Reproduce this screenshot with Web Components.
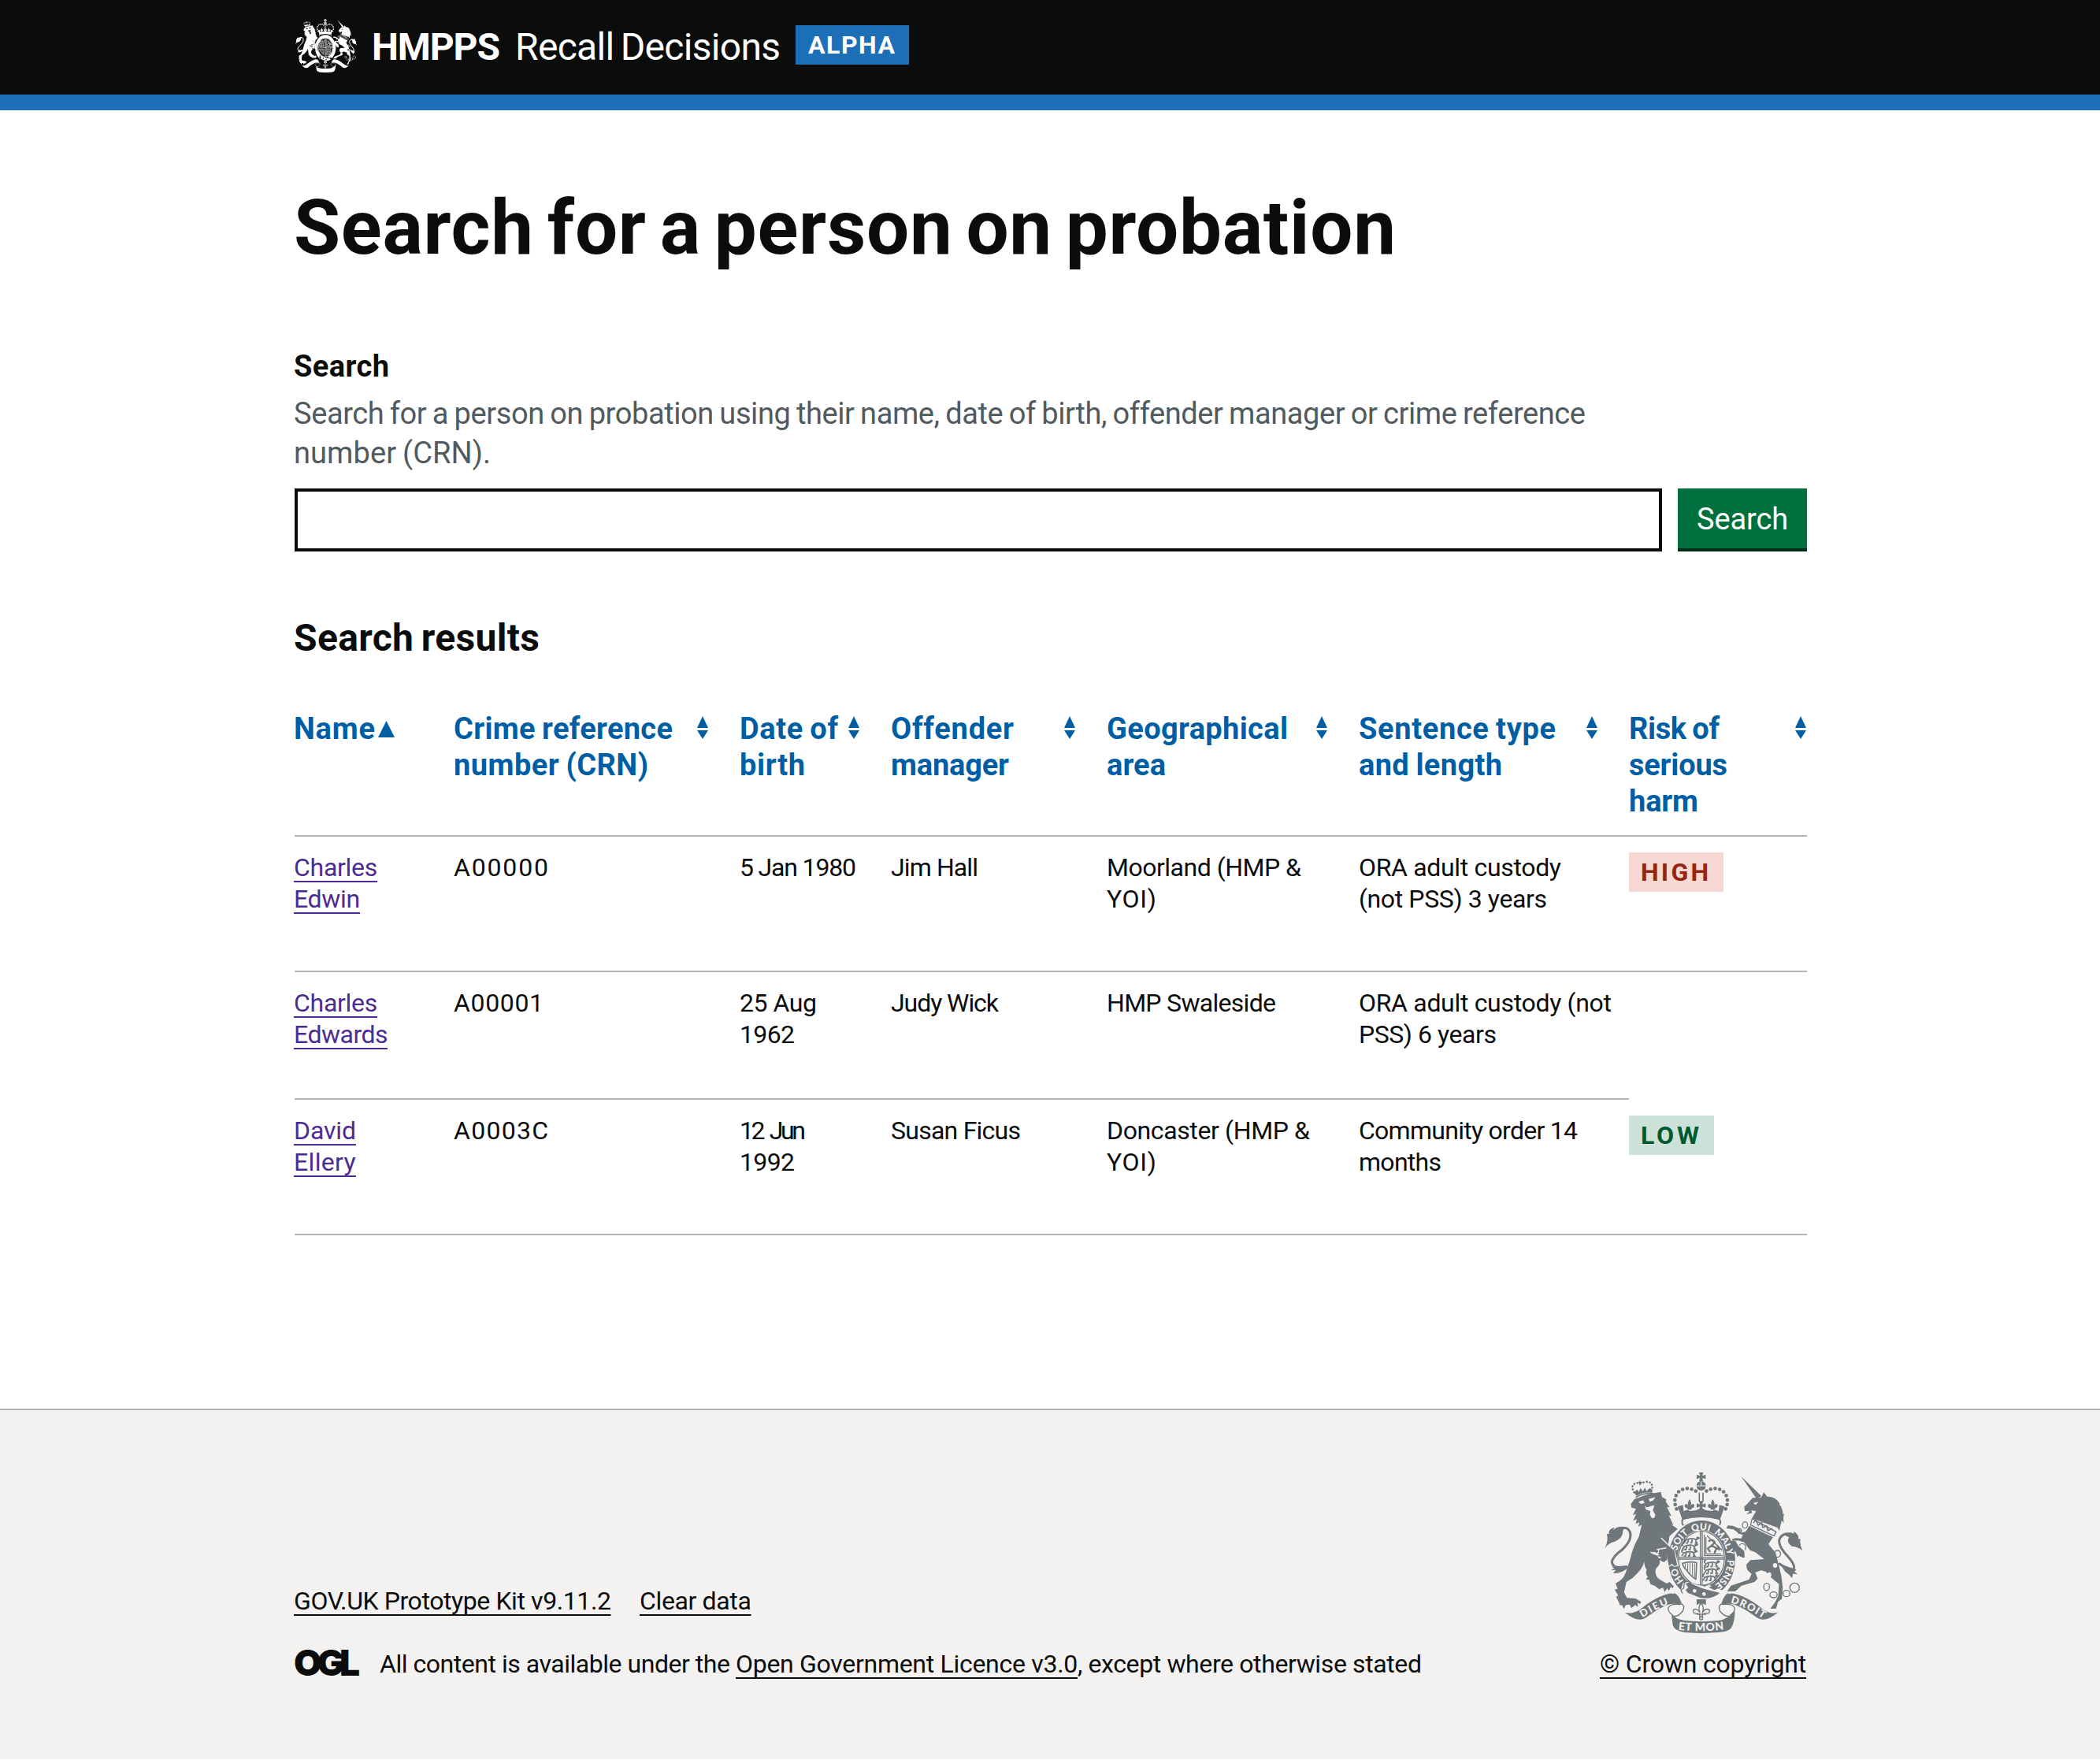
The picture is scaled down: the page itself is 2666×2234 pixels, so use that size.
<!DOCTYPE html>
<html lang="en">
<head>
<meta charset="utf-8">
<title>Search for a person on probation</title>
<style>
  html, body { margin: 0; background: #fff; }
  body { font-family: Roboto, "Liberation Sans", sans-serif; color: #0b0c0c; font-size: 32px; line-height: 40px; }
</style>
</head>
<body>
<recall-page></recall-page>

<template id="t-page">
  <style>
    :host { display: block; height: 2233px; overflow: hidden; }
    .page { display: flex; flex-direction: column; height: 100%; }
    main { flex: 1; width: 1920px; margin: 0 auto 0 374px; padding-top: 99px; box-sizing: border-box; }
    h1 { margin: 0 0 0 -1px; font: bold 96px/100px Roboto, sans-serif; word-spacing: -.08em; }
    h2 { margin: 80px 0 62px -1px; font: bold 48px/60px Roboto, sans-serif; word-spacing: -.06em; }
  </style>
  <div class="page">
    <site-header></site-header>
    <main>
      <h1><fit-line w="1399">Search for a person on probation</fit-line></h1>
      <search-form></search-form>
      <h2><fit-line w="312">Search results</fit-line></h2>
      <results-table></results-table>
    </main>
    <site-footer></site-footer>
  </div>
</template>

<template id="t-header">
  <style>
    :host { display: block; background: #0b0c0c; color: #fff; border-bottom: 20px solid #1d70b8; height: 120px; flex: none; }
    .bar { display: flex; align-items: flex-start; padding-left: 375px; font-size: 48px; line-height: 60px; }
    royal-crest { width: 78px; height: 68px; margin-top: 24px; --crest-bg: #0b0c0c; }
    .org { margin: 30px 0 0 19px; font-weight: bold; }
    .name { margin: 30px 0 0 19px; word-spacing: -.06em; }
    status-tag { margin: 32px 0 0 19px; }
  </style>
  <div class="bar">
    <royal-crest compact></royal-crest>
    <fit-line class="org" w="163">HMPPS</fit-line>
    <fit-line class="name" w="337">Recall Decisions</fit-line>
    <status-tag tone="blue" style="width:144px"><fit-line w="110">ALPHA</fit-line></status-tag>
  </div>
</template>

<template id="t-form">
  <style>
    :host { display: block; margin-top: 101px; font-size: 38px; line-height: 50px; word-spacing: -.04em; }
    label { display: block; font-weight: bold; margin-left: -1px; }
    .hint { color: #505a5f; margin: 10px 0 0 -1px; }
    .row { display: flex; gap: 20px; margin-top: 20px; height: 80px; }
    input { flex: 1; box-sizing: border-box; height: 80px; border: 4px solid #0b0c0c; border-radius: 0; background: #fff; padding: 0 8px; font: inherit; }
    button { width: 164px; height: 76px; border: 0; border-radius: 0; background: #00703c; box-shadow: 0 4px 0 #002d18; color: #fff; font: inherit; padding: 1px 0 0; display: flex; align-items: center; justify-content: center; }
  </style>
  <label for="q"><fit-line w="121">Search</fit-line></label>
  <div class="hint">
    <fit-line w="1640">Search for a person on probation using their name, date of birth, offender manager or crime reference</fit-line>
    <fit-line w="250">number (CRN).</fit-line>
  </div>
  <div class="row"><input id="q" type="text"><button type="button"><fit-line w="116">Search</fit-line></button></div>
</template>

<template id="t-table">
  <style>
    :host { display: block; }
    a { color: #4c2c92; text-decoration: none; display: block; margin-left: -1px; }
  </style>
  <table-row heading style="height:160px">
    <sort-head state="ascending"><fit-line w="103" style="margin-left:-1px">Name</fit-line></sort-head>
    <sort-head><fit-line w="278">Crime reference</fit-line><fit-line w="247">number (CRN)</fit-line></sort-head>
    <sort-head><fit-line w="125">Date of</fit-line><fit-line w="83">birth</fit-line></sort-head>
    <sort-head><fit-line w="156">Offender</fit-line><fit-line w="150">manager</fit-line></sort-head>
    <sort-head><fit-line w="230">Geographical</fit-line><fit-line w="75">area</fit-line></sort-head>
    <sort-head><fit-line w="250">Sentence type</fit-line><fit-line w="182">and length</fit-line></sort-head>
    <sort-head last><fit-line w="115">Risk of</fit-line><fit-line w="125">serious</fit-line><fit-line w="88">harm</fit-line></sort-head>
  </table-row>
  <table-row style="height:172px">
    <table-cell><a><fit-line u w="106">Charles</fit-line><fit-line u w="84">Edwin</fit-line></a></table-cell>
    <table-cell><fit-line w="120">A00000</fit-line></table-cell>
    <table-cell><fit-line w="148">5 Jan 1980</fit-line></table-cell>
    <table-cell><fit-line w="111">Jim Hall</fit-line></table-cell>
    <table-cell><fit-line w="247">Moorland (HMP &amp;</fit-line><fit-line w="63">YOI)</fit-line></table-cell>
    <table-cell><fit-line w="257">ORA adult custody</fit-line><fit-line w="239">(not PSS) 3 years</fit-line></table-cell>
    <table-cell><status-tag tone="red" style="width:120px"><fit-line w="86">HIGH</fit-line></status-tag></table-cell>
  </table-row>
  <table-row style="height:162px">
    <table-cell><a><fit-line u w="106">Charles</fit-line><fit-line u w="119">Edwards</fit-line></a></table-cell>
    <table-cell><fit-line w="114">A00001</fit-line></table-cell>
    <table-cell><fit-line w="98">25 Aug</fit-line><fit-line w="70">1962</fit-line></table-cell>
    <table-cell><fit-line w="137">Judy Wick</fit-line></table-cell>
    <table-cell><fit-line w="215">HMP Swaleside</fit-line></table-cell>
    <table-cell><fit-line w="321">ORA adult custody (not</fit-line><fit-line w="175">PSS) 6 years</fit-line></table-cell>
  </table-row>
  <table-row style="height:172px">
    <table-cell><a><fit-line u w="79">David</fit-line><fit-line u w="79">Ellery</fit-line></a></table-cell>
    <table-cell><fit-line w="120">A0003C</fit-line></table-cell>
    <table-cell><fit-line w="84" style="word-spacing:4px">12 Jun</fit-line><fit-line w="70">1992</fit-line></table-cell>
    <table-cell><fit-line w="165">Susan Ficus</fit-line></table-cell>
    <table-cell><fit-line w="258">Doncaster (HMP &amp;</fit-line><fit-line w="63">YOI)</fit-line></table-cell>
    <table-cell><fit-line w="278">Community order 14</fit-line><fit-line w="105">months</fit-line></table-cell>
    <table-cell><status-tag tone="green" style="width:108px"><fit-line w="74">LOW</fit-line></status-tag></table-cell>
  </table-row>
</template>

<template id="t-row">
  <style>
    :host { display: grid; grid-template-columns: 202px 363px 192px 274px 320px 343px 226px; }
  </style>
  <slot></slot>
</template>

<template id="t-cell">
  <style>
    :host { display: block; box-sizing: border-box; border-bottom: 2px solid #b1b4b6; padding-top: 19px; }
    ::slotted(status-tag) { margin-top: 1px; }
  </style>
  <slot></slot>
</template>

<template id="t-sort">
  <style>
    :host { display: flex; justify-content: space-between; box-sizing: border-box; border-bottom: 2px solid #b1b4b6; padding-right: 40px; color: #005ea5; font-size: 38px; font-weight: bold; line-height: 46px; word-spacing: -.04em; }
    :host([last]) { padding-right: 1px; }
    :host([state="ascending"]) { justify-content: flex-start; }
    svg { display: block; flex: none; fill: currentColor; }
    .both { margin-top: 7px; }
    .up { display: none; margin: 13px 0 0 4px; }
    :host([state="ascending"]) .both { display: none; }
    :host([state="ascending"]) .up { display: block; }
  </style>
  <div><slot></slot></div>
  <svg class="both" width="14" height="29" viewBox="0 0 14 29"><path d="M7 0 14 15H0ZM0 18H14L7 29Z"/></svg>
  <svg class="up" width="21" height="21" viewBox="0 0 21 21"><path d="M10.500 0 21 21H0Z"/></svg>
</template>

<template id="t-tag">
  <style>
    :host { display: flex; justify-content: flex-start; box-sizing: border-box; padding-left: 15px; height: 50px; line-height: 50px; font-size: 32px; font-weight: bold; }
    :host([tone="blue"]) { background: #1d70b8; color: #fff; padding-left: 16px; }
    :host([tone="red"]) { background: #f6d7d2; color: #942514; }
    :host([tone="green"]) { background: #cce2d8; color: #005a30; }
  </style>
  <slot></slot>
</template>

<template id="t-footer">
  <style>
    :host { display: block; flex: none; box-sizing: border-box; height: 445px; background: #f3f2f1; border-top: 2px solid #b1b4b6; }
    .inner { display: flex; justify-content: space-between; align-items: flex-end; width: 1920px; height: 342px; margin-left: 373px; }
    .links { display: flex; gap: 36.500px; margin-bottom: 40px; }
    .licence { display: flex; align-items: flex-start; }
    .ogl { font: 900 46px/40px Inter, sans-serif; margin: -2px 25px 0 0; }
    .gap { margin-right: 7px; }
    .copy { display: flex; flex-direction: column; align-items: flex-end; color: #0b0c0c; }
    royal-crest { width: 252px; height: 204px; margin: 0 4px 19px 0; color: #6f777b; --crest-bg: #f3f2f1; }
  </style>
  <div class="inner">
    <div>
      <div class="links"><fit-line u w="402.500">GOV.UK Prototype Kit v9.11.2</fit-line><fit-line u w="141.500">Clear data</fit-line></div>
      <div class="licence">
        <fit-line class="ogl" w="84">OGL</fit-line>
        <fit-line class="gap" w="445">All content is available under the</fit-line>
        <fit-line u w="434">Open Government Licence v3.0</fit-line>
        <fit-line w="437">, except where otherwise stated</fit-line>
      </div>
    </div>
    <div class="copy"><royal-crest></royal-crest><fit-line u w="262">© Crown copyright</fit-line></div>
  </div>
</template>

<template id="t-crest">
  <style>
    :host { display: block; }
    svg { display: block; width: 100%; height: 100%; overflow: visible; }
    .f { fill: currentColor; } .b { fill: var(--crest-bg); }
    .s { fill: none; stroke: currentColor; stroke-linecap: round; stroke-linejoin: round; }
    .k { fill: none; stroke: var(--crest-bg); stroke-linecap: round; stroke-linejoin: round; }
    text { fill: var(--crest-bg); font: 900 36px Lato, sans-serif; }
    :host([compact]) text { display: none; }
  </style>
  <svg viewBox="83 57 752 612" preserveAspectRatio="none" aria-hidden="true">
    <defs>
      <path id="ring" d="M451 500A98 112 0 0 1 451 276A98 112 0 0 1 451 500"/>
      <path id="dieu" d="M226 610Q282 574 340 554"/>
      <path id="mon" d="M362 656Q450 667 550 653"/>
      <path id="droit" d="M560 553Q622 568 720 640"/>
      <g id="fleur"><path d="M0-22Q-11-7-3 4Q-11-9-18 0Q-20 11-9 12L-6 18H6L9 12Q20 11 18 0Q11-9 3 4Q11-7 0-22Z"/></g>
      <g id="cross"><path d="M-8-17H8L4-4 17-8V8L4 4 8 17H-8L-4 4-17 8V-8L-4-4Z"/></g>
      <g id="pass"><path d="M-28-4Q-32-16-22-14M-26-1-10-6Q6-10 16-3L26-8M-22 0-30 9M-12-2-16 10H-22M2-4 0 9H-6M14-2 20 9H12M18-8Q26-16 29-6" fill="none" stroke="currentColor" stroke-width="5.500"/></g>
    </defs>

    <!-- crown -->
    <use href="#cross" class="f" x="449" y="74"/>
    <circle class="f" cx="449" cy="108" r="18"/><path class="k" stroke-width="3" d="M431 108H467M449 92V107"/>
    <path class="s" stroke-width="14" stroke-dasharray="0 17.500" d="M356 196Q340 160 362 132Q396 103 438 134"/>
    <path class="s" stroke-width="14" stroke-dasharray="0 17.500" d="M542 196Q558 160 536 132Q502 103 460 134"/>
    <path class="s" stroke-width="5" d="M442 136V166M456 136V166"/>
    <use href="#fleur" class="f" x="405" y="181"/><use href="#fleur" class="f" x="493" y="181"/>
    <use href="#cross" class="f" x="449" y="183"/>
    <path class="f" d="M360 187 380 181 383 205 Q400 195 405 204 L430 201 449 192 468 201 493 204 Q498 195 515 205L518 181 538 187 520 238Q449 218 378 238Z"/>
    <path class="s" stroke-width="6" d="M383 232Q449 215 516 232Q528 244 517 260Q449 228 382 260Q370 244 383 232Z"/>

    <!-- lion -->
    <path class="s" stroke-width="8" stroke-dasharray="0 12" d="M195 133Q178 102 207 97L218 99L233 94Q268 87 263 122"/>
    <path class="s" stroke-width="4" d="M202 151Q232 134 267 137M217 90V105M211 95H224"/>
    <path class="f" d="M195 131 208 122 213 132 219 116 228 129 236 114 242 128 254 116 264 123 264 134Q232 130 203 146Z"/>
    <path class="f" d="M183 176 197 158 247 140 296 131 301 151 317 160 315 169 330 190 319 188 336 223 327 221 344 259 334 254 360 272 329 300 324 332 350 352 357 409 346 413 337 405 331 413 319 389 308 399 284 386 300 381 281 374 292 371 274 360 256 360Q292 371 293 399Q291 413 278 422Q271 444 287 461L318 480 330 474 346 491 339 499 335 491 327 508 320 498 311 512 304 496 290 502 275 490 257 482 252 466 240 464 247 454Q236 445 243 427Q235 420 233 397Q229 424 190 458L166 474 157 514 168 535 200 537 222 550 217 558 208 552 210 569 199 562 185 574 178 560 164 562 156 576 149 562 141 563 139 555 127 530 135 526 121 503 132 500 125 479Q154 467 163 439L180 388Q190 340 213 302L224 256 211 263 215 247 201 253 205 235 191 241 203 215 190 220 202 195 185 191Z"/>
    <path class="b" d="M211 169 229 163 235 173 221 177ZM250 158 275 151 268 163 255 169ZM235 183Q243 195 256 185L272 182 266 202 275 217Q275 235 262 230Q252 220 257 204L240 199Z"/>
    <path class="k" stroke-width="4" d="M298 307 331 340M258 361Q287 382 288 351M282 350 315 345"/>
    <path class="s" stroke-width="9" d="M166 416Q116 427 111 398Q113 377 151 350Q188 315 180 285Q169 262 150 270"/>
    <path class="f" d="M166 265Q130 258 117 277L119 266Q94 275 101 291L92 291Q98 319 84 346Q96 326 122 320Q154 308 153 277ZM166 412 109 416 121 422 106 430 126 428 115 442Q157 439 174 417Z"/>

    <!-- unicorn -->
    <path class="f" d="M600 71 678 148 658 156Z"/>
    <path class="f" d="M612 188 626 174 644 154 677 152 686 132 699 149Q733 148 748 178L744 177Q760 196 758 216L763 213Q758 233 762 250L754 240 745 279 738 267 641 232 657 205 639 201 642 211 621 217 633 204 614 204Z"/>
    <path class="b" d="M647 173 666 169 655 181Z"/>
    <path class="b" d="M642 231 735 283 725 301 634 258Z"/>
    <path class="s" stroke-width="4" d="M642 233 733 283 725 299 636 257Z"/>
    <path class="s" stroke-width="5" d="M648 248 656 238 665 258 678 249 683 267 697 260 702 278 717 271"/>
    <path class="f" d="M631 260 721 304 704 330 731 363 742 405 753 453 758 494 755 538 740 550 733 575 711 576 729 551 741 527 744 482 716 459 693 434 676 430 654 438 663 461 651 474 602 488 578 510 547 510 562 488 584 481 630 465 640 444 623 427 620 408 636 391 688 387 654 361 634 353 612 323 589 316 578 318 590 337 612 356 614 381 598 378 574 359 582 375 559 344 556 315 579 307 601 308 607 295 593 290 572 274 544 270 550 259 569 260 597 272 599 288 619 281Z"/>
    <path class="s" stroke-width="9" d="M746 405Q797 441 801 420Q803 405 774 373Q731 325 751 302Q773 280 791 302"/>
    <path class="f" d="M758 293Q782 280 800 290L800 282Q821 294 817 311L825 309Q821 335 835 357Q820 340 792 338Q770 321 782 304ZM752 407 810 427 802 434 814 444 796 443 794 460 782 446Q762 434 752 407Z"/>
    <g class="s" stroke-width="4"><ellipse cx="615" cy="257" rx="10" ry="12"/><ellipse cx="595" cy="280" rx="7" ry="9"/><ellipse cx="605" cy="342" rx="13" ry="14"/><ellipse cx="738" cy="367" rx="12" ry="13"/><ellipse cx="697" cy="493" rx="11" ry="14"/><ellipse cx="723" cy="523" rx="14" ry="11"/><ellipse cx="772" cy="518" rx="13" ry="12"/><circle cx="803" cy="496" r="18"/></g>
    <g class="b"><ellipse cx="729" cy="411" rx="8" ry="9"/><ellipse cx="707" cy="446" rx="8" ry="9"/></g>

    <!-- garter and shield -->
    <ellipse class="b" cx="451" cy="388" rx="132" ry="153"/>
    <ellipse class="f" cx="451" cy="388" rx="127" ry="148"/>
    <ellipse class="b" cx="450" cy="384" rx="91" ry="107"/>
    <ellipse class="s" stroke-width="4" cx="450" cy="384" rx="87" ry="103"/>
    <path class="s" stroke-width="4" d="M446 282V485M453 282V485M365 380H535M365 387H535"/>
    <use href="#pass" x="413" y="316"/><use href="#pass" x="407" y="341"/><use href="#pass" x="405" y="366"/><use href="#pass" x="490" y="406"/><use href="#pass" x="490" y="432"/><use href="#pass" x="485" y="459"/>
    <path class="s" stroke-width="4" d="M461 295V373H530M467 305V367H522M472 299 527 352"/>
    <path class="s" stroke-width="7" d="M479 318Q494 309 501 324L489 335 507 346 500 362M489 335 474 347 482 358M507 346 518 351 511 336"/>
    <path class="s" stroke-width="5" d="M378 403Q407 394 432 401L429 464Q407 450 395 431Q378 413 378 403Z"/>
    <path class="s" stroke-width="3" d="M389 405V419M398 404V432M407 403V444M416 403V452M424 404V458"/>
    <!-- motto words, placed by distance along the ring -->
    <text><textPath href="#ring" startOffset="76">HO</textPath></text>
    <text><textPath href="#ring" startOffset="197">SOIT</textPath></text>
    <text><textPath href="#ring" startOffset="293">QUI</textPath></text>
    <text><textPath href="#ring" startOffset="378">MAL</textPath></text>
    <text><textPath href="#ring" startOffset="456">Y</textPath></text>
    <text><textPath href="#ring" startOffset="496">PENSE</textPath></text>
    <!-- paws over the garter -->
    <path class="k" stroke-width="9" d="M322 340 345 356 358 410 348 412 337 405 328 412"/>
    <path class="f" d="M318 330 347 355 358 410 348 414 338 404 328 414 320 385Z"/>
    <path class="k" stroke-width="9" d="M577 320 590 337 612 356 612 378"/>
    <path class="f" d="M556 317 579 318 590 337 612 356 614 381 606 382 597 372 586 378 582 360 570 352Z"/>
    <!-- buckle -->
    <path class="b" d="M380 478 406 470 420 480Q452 496 480 486L540 510 517 528 455 546 385 520 372 508Z"/>
    <path class="f" d="M390 480 404 475Q445 501 507 512L520 516Q489 542 446 535L398 515 390 504 400 496Z"/>
    <path class="s" stroke-width="4" d="M378 516Q367 505 383 498L385 478Q397 465 411 478L406 486"/>
    <circle class="b" cx="424" cy="508" r="7"/><circle class="b" cx="460" cy="520" r="7"/>
    <path class="f" d="M453 486 476 482 462 493ZM478 494 499 486Q508 492 511 500L498 505Z"/>

    <!-- ribbon -->
    <path class="f" d="M160 590Q190 598 216 580Q275 530 328 518Q364 514 372 559L344 557Q310 557 240 610Q210 631 160 590Z"/>
    <path class="f" d="M740 590Q710 598 685 580Q628 530 572 518Q536 514 526 559L556 557Q590 557 660 610Q690 631 740 590Z"/>
    <path class="b" d="M350 561Q362 559 373 560Q388 568 378 585Q360 604 343 599L327 590Q321 564 350 561ZM552 561Q540 559 528 560Q513 568 521 585Q540 604 557 599L575 590Q581 564 552 561Z"/>
    <path class="s" stroke-width="4" d="M347 519Q362 523 373 556Q390 565 379 585Q360 610 344 603M551 519Q540 523 528 556Q512 565 520 585Q540 610 556 603M370 560Q330 556 324 574Q323 588 340 600M530 560Q570 556 576 574Q577 588 560 600"/>
    <path class="f" d="M336 594Q350 616 386 621Q450 628 514 621Q550 616 577 584Q576 630 562 650Q550 665 500 667Q450 671 400 667Q346 663 341 635Z"/>
    <text style="font-size:39px"><textPath href="#dieu" textLength="112">DIEU</textPath></text>
    <text style="font-size:42px"><textPath href="#mon" textLength="174">ET MON</textPath></text>
    <text style="font-size:39px"><textPath href="#droit" textLength="138">DROIT</textPath></text>
    <path class="f" d="M432 540H467V562L449 554 432 562Z"/>
    <path class="s" stroke-width="4" d="M449 555Q436 568 444 590Q433 572 420 580Q415 594 430 594L444 596V610M449 555Q462 568 454 590Q465 572 480 580Q485 594 470 594L454 596V610M433 597H466"/>
    <circle class="s" stroke-width="4" cx="449" cy="612" r="6"/>
  </svg>
</template>

<script>
  const base = (id) => class extends HTMLElement {
    constructor() {
      super();
      this.attachShadow({ mode: "open" }).append(document.getElementById(id).content.cloneNode(true));
    }
  };

  /* One line of text tracked so that its advance equals the w attribute. */
  class FitLine extends HTMLElement {
    constructor() {
      super();
      this.attachShadow({ mode: "open" }).innerHTML =
        `<style>
          :host { display: block; flex: none; white-space: nowrap; }
          span { display: inline-block; vertical-align: top; }
          :host([u]) span { text-decoration: underline 2px; text-underline-offset: 6px; text-decoration-skip-ink: none; }
        </style><span><slot></slot></span>`;
    }
    connectedCallback() {
      const w = parseFloat(this.getAttribute("w"));
      this.style.width = w + "px";
      const span = this.shadowRoot.querySelector("span");
      const natural = span.getBoundingClientRect().width;
      const n = this.textContent.trim().length;
      span.style.letterSpacing = (w - natural) / (this.hasAttribute("u") ? n : n - 1) + "px";
    }
  }

  for (const [name, id] of [
    ["recall-page", "t-page"], ["site-header", "t-header"], ["search-form", "t-form"],
    ["results-table", "t-table"], ["table-row", "t-row"], ["sort-head", "t-sort"],
    ["table-cell", "t-cell"], ["status-tag", "t-tag"], ["site-footer", "t-footer"],
    ["royal-crest", "t-crest"]
  ]) customElements.define(name, base(id));
  customElements.define("fit-line", FitLine);
</script>
</body>
</html>
